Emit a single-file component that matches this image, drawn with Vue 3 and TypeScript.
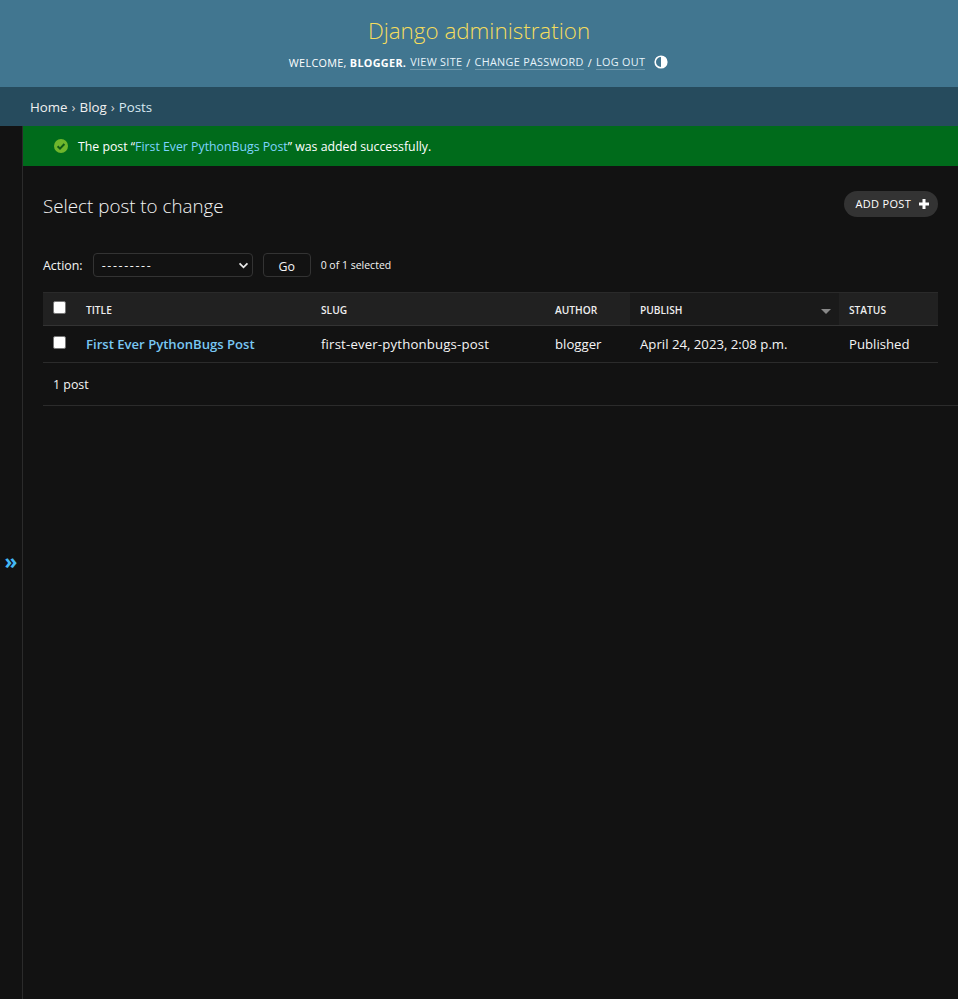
<template>
  <div class="page">
    <header class="site-header">
      <h1 class="brand">Django administration</h1>
      <div class="user-tools">
        <span>Welcome, <strong>blogger.</strong></span>
        <a class="tool-link">View site</a><span class="sep">/</span>
        <a class="tool-link">Change password</a><span class="sep">/</span>
        <a class="tool-link">Log out</a>
        <svg class="theme-icon" viewBox="0 0 14 14">
          <circle cx="7" cy="7" r="5.8" fill="none" stroke="#fff" stroke-width="1.6" />
          <path d="M7 1.2a5.8 5.8 0 0 1 0 11.6z" fill="#fff" />
        </svg>
      </div>
    </header>

    <nav class="breadcrumbs">
      <a>Home</a><span class="crumb-sep">›</span><a>Blog</a><span class="crumb-sep">›</span>Posts
    </nav>

    <div class="main">
      <aside class="nav-toggle"><span>»</span></aside>

      <div class="content-wrap">
        <div class="message">
          <svg class="check" viewBox="0 0 14 14">
            <circle cx="7" cy="7" r="7" fill="#6fb62c" />
            <path d="M3.6 7.2l2.4 2.4 4.4-4.6" fill="none" stroke="#0f5a17" stroke-width="2" />
          </svg>
          <span>The post “<a>First Ever PythonBugs Post</a>” was added successfully.</span>
        </div>

        <main class="content">
          <div class="title-row">
            <h2>Select post to change</h2>
            <a class="add-btn">
              Add post
              <svg viewBox="0 0 12 12"><path d="M4.5 1h3v3.5H11v3H7.5V11h-3V7.5H1v-3h3.5z" fill="#fff" /></svg>
            </a>
          </div>

          <div class="actions">
            <label>Action:</label>
            <div class="select">
              <span class="dashes">---------</span>
              <svg viewBox="0 0 12 8"><path d="M1.5 1.5L6 6l4.5-4.5" fill="none" stroke="#e8e8e8" stroke-width="2" /></svg>
            </div>
            <button class="go">Go</button>
            <span class="counter">0 of 1 selected</span>
          </div>

          <table class="results">
            <colgroup>
              <col v-for="w in colWidths" :key="w.name" :style="{ width: w.px + 'px' }" />
            </colgroup>
            <thead>
              <tr>
                <th class="check-cell"><span class="box"></span></th>
                <th>Title</th>
                <th>Slug</th>
                <th>Author</th>
                <th class="sorted">
                  Publish
                  <span class="sort-arrow"></span>
                </th>
                <th>Status</th>
              </tr>
            </thead>
            <tbody>
              <tr v-for="post in posts" :key="post.slug">
                <td class="check-cell"><span class="box"></span></td>
                <td><a class="post-link">{{ post.title }}</a></td>
                <td class="slug">{{ post.slug }}</td>
                <td>{{ post.author }}</td>
                <td>{{ post.publish }}</td>
                <td>{{ post.status }}</td>
              </tr>
            </tbody>
          </table>

          <p class="paginator">1 post</p>
        </main>
      </div>
    </div>
  </div>
</template>

<script setup lang="ts">
const colWidths = [
  { name: 'check', px: 33 },
  { name: 'title', px: 235 },
  { name: 'slug', px: 234 },
  { name: 'author', px: 85 },
  { name: 'publish', px: 209 },
  { name: 'status', px: 99 },
]

const posts = [
  {
    title: 'First Ever PythonBugs Post',
    slug: 'first-ever-pythonbugs-post',
    author: 'blogger',
    publish: 'April 24, 2023, 2:08 p.m.',
    status: 'Published',
  },
]
</script>

<style>
body {
  margin: 0;
  background: #121212;
}
</style>

<style scoped>
.page {
  min-height: 999px;
  display: flex;
  flex-direction: column;
  background: #121212;
  color: #f5f5f5;
  font-family: "Open Sans", "Noto Sans", sans-serif;
  font-size: 13px;
}

/* header */
.site-header {
  height: 87px;
  box-sizing: border-box;
  padding-top: 15px;
  background: #417690;
  text-align: center;
}

.brand {
  margin: 0;
  height: 32px;
  font-size: 22.4px;
  line-height: 32px;
  font-weight: 300;
  color: #f5dd5d;
}

.user-tools {
  margin-top: 7px;
  display: flex;
  justify-content: center;
  align-items: center;
  gap: 4px;
  height: 16px;
  font-size: 10.8px;
  letter-spacing: 0.32px;
  text-transform: uppercase;
  color: #fff;
  padding-right: 1px;
}

.user-tools strong {
  font-weight: 700;
}

.tool-link {
  border-bottom: 1px solid rgba(255, 255, 255, 0.25);
  color: #e6f3fa;
  line-height: 15px;
}

.theme-icon {
  width: 14px;
  height: 14px;
  margin-left: 5px;
}

/* breadcrumbs */
.breadcrumbs {
  height: 39px;
  box-sizing: border-box;
  padding: 0 30px;
  background: #264b5d;
  color: #d6e8f2;
  font-size: 13.3px;
  line-height: 40px;
}

.breadcrumbs a {
  color: #f0f0f0;
}

.crumb-sep {
  margin: 0 4px;
  color: #d0d0d0;
}

/* layout */
.main {
  flex: 1;
  display: flex;
}

.nav-toggle {
  width: 22px;
  flex-shrink: 0;
  border-right: 1px solid #2b2b2b;
  display: flex;
  align-items: center;
  justify-content: center;
  color: #44b8f5;
  font-size: 21px;
  font-weight: 700;
  padding-bottom: 4px;
}

.content-wrap {
  flex: 1;
  min-width: 0;
}

.message {
  height: 40px;
  box-sizing: border-box;
  display: flex;
  align-items: center;
  padding-left: 31px;
  background: #006b1b;
  color: #fff;
  font-size: 12.3px;
}

.message a {
  color: #7fd4ff;
}

.check {
  width: 14px;
  height: 14px;
  margin-right: 10px;
}

.content {
  padding: 25px 0 0 20px;
}

.title-row {
  display: flex;
  justify-content: space-between;
  align-items: flex-start;
  padding-right: 20px;
  height: 62px;
}

.title-row h2 {
  margin: 0;
  font-size: 18.8px;
  line-height: 31px;
  font-weight: 300;
  color: #f5f5f5;
}

.add-btn {
  display: flex;
  align-items: center;
  gap: 7px;
  height: 26px;
  box-sizing: border-box;
  padding: 0 8px 2px 12px;
  border-radius: 15px;
  background: #333;
  color: #fff;
  font-size: 11px;
  letter-spacing: 0.3px;
  text-transform: uppercase;
}

.add-btn svg {
  width: 12px;
  height: 12px;
  margin-top: 2px;
}

.actions {
  display: flex;
  align-items: center;
  height: 24px;
  font-size: 12.4px;
}

.select {
  margin-left: 10px;
  width: 160px;
  height: 24px;
  box-sizing: border-box;
  border: 1px solid #333;
  border-radius: 4px;
  display: flex;
  align-items: center;
  justify-content: space-between;
  padding: 0 3px 0 8px;
  font-size: 12.4px;
}

.dashes {
  letter-spacing: 1.65px;
}

.select svg {
  width: 11px;
  height: 7px;
}

.go {
  margin-left: 10px;
  width: 48px;
  height: 24px;
  border: 1px solid #333;
  border-radius: 4px;
  background: #121212;
  color: #f5f5f5;
  font: inherit;
  font-size: 12.4px;
  padding: 2px 0 0;
}

.counter {
  margin-left: 10px;
  font-size: 10.5px;
}

.results {
  margin-top: 15px;
  width: 895px;
  table-layout: fixed;
  border-collapse: collapse;
}

th {
  height: 33px;
  padding: 1px 10px 0;
  box-sizing: border-box;
  background: #212121;
  border-top: 1px solid #2a2a2a;
  border-bottom: 1px solid #333;
  text-align: left;
  color: #eee;
  font-size: 10.2px;
  font-weight: 600;
  text-transform: uppercase;
}

th.sorted {
  position: relative;
  background: #1a1a1a;
}

.sort-arrow {
  position: absolute;
  right: 8px;
  top: 16px;
  border-left: 5px solid transparent;
  border-right: 5px solid transparent;
  border-top: 5px solid #888;
}

td {
  height: 37px;
  padding: 0 10px;
  box-sizing: border-box;
  border-bottom: 1px solid #2b2b2b;
  font-size: 13.2px;
  white-space: nowrap;
}

.slug {
  letter-spacing: 0.17px;
}

.check-cell {
  padding: 0 0 4px 10px;
}

.box {
  display: block;
  width: 13px;
  height: 13px;
  background: #fff;
  border-radius: 2px;
  border: 1px solid #767676;
  box-sizing: border-box;
}

.post-link {
  color: #79c7f2;
  font-size: 13.1px;
  font-weight: 600;
}

.paginator {
  margin: 0;
  height: 43px;
  box-sizing: border-box;
  padding-left: 10px;
  border-bottom: 1px solid #2b2b2b;
  font-size: 12.4px;
  line-height: 44px;
}
</style>
